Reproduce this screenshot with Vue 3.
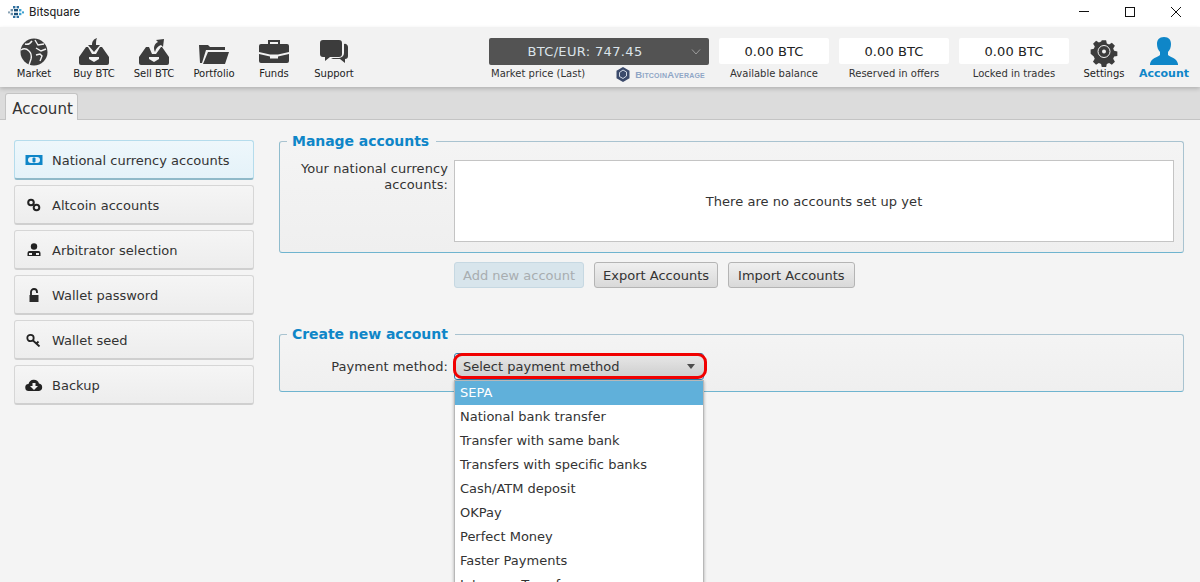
<script setup>
const navItems = [
  { label: 'Market', icon: 'market' },
  { label: 'Buy BTC', icon: 'buy' },
  { label: 'Sell BTC', icon: 'sell' },
  { label: 'Portfolio', icon: 'portfolio' },
  { label: 'Funds', icon: 'funds' },
  { label: 'Support', icon: 'support' },
]
const balances = [
  { value: '0.00 BTC', label: 'Available balance' },
  { value: '0.00 BTC', label: 'Reserved in offers' },
  { value: '0.00 BTC', label: 'Locked in trades' },
]
const sideItems = [
  { label: 'National currency accounts', icon: 'money', active: true },
  { label: 'Altcoin accounts', icon: 'link' },
  { label: 'Arbitrator selection', icon: 'arb' },
  { label: 'Wallet password', icon: 'lock' },
  { label: 'Wallet seed', icon: 'key' },
  { label: 'Backup', icon: 'cloud' },
]
const options = [
  'National bank transfer',
  'Transfer with same bank',
  'Transfers with specific banks',
  'Cash/ATM deposit',
  'OKPay',
  'Perfect Money',
  'Faster Payments',
  'Interac e-Transfer',
]
</script>

<template>
  <div class="app">
    <header class="titlebar">
      <svg class="logo" width="16" height="12" viewBox="0 0 16 12">
        <g fill="#2f6f9f">
          <rect x="5" y="0" width="2.4" height="2.4" /><rect x="8.6" y="0" width="2.4" height="2.4" />
          <rect x="2.6" y="3" width="2.4" height="2.4" fill="#6b8ea8" /><rect x="6" y="3" width="4" height="2.4" fill="#1c4f78" /><rect x="11" y="3" width="2.4" height="2.4" fill="#3aa0d0" />
          <rect x="0" y="5.4" width="2" height="2" fill="#8aa3b5" /><rect x="14" y="5.4" width="2" height="2" fill="#3aa0d0" />
          <rect x="2.6" y="6.8" width="2.4" height="2.4" fill="#6b8ea8" /><rect x="6" y="6.8" width="4" height="2.4" fill="#1c4f78" /><rect x="11" y="6.8" width="2.4" height="2.4" fill="#3aa0d0" />
          <rect x="5" y="9.8" width="2.4" height="2.2" /><rect x="8.6" y="9.8" width="2.4" height="2.2" />
        </g>
      </svg>
      <span class="app-name">Bitsquare</span>
      <div class="win-controls">
        <svg width="12" height="12" viewBox="0 0 12 12"><path d="M1 5.5h10" stroke="#111" fill="none" /></svg>
        <svg width="12" height="12" viewBox="0 0 12 12"><rect x="1.5" y="1.5" width="9" height="9" stroke="#111" fill="none" /></svg>
        <svg width="12" height="12" viewBox="0 0 12 12"><path d="M1 1l10 10M11 1L1 11" stroke="#111" fill="none" /></svg>
      </div>
    </header>

    <nav class="topbar">
      <div class="nav-left">
        <div v-for="item in navItems" :key="item.label" class="nav-item">
          <svg class="nav-icon" width="34" height="30" viewBox="0 0 34 30">
            <g v-if="item.icon === 'market'">
              <circle cx="17" cy="15" r="13.5" fill="#3c3c3c" />
              <g fill="none" stroke="#f2f2f2" stroke-width="1.4">
                <path d="M8 7c3 1 5 0 7-3" />
                <path d="M4 13c3-2 6-1 8 1s3 4 2 8l-2 6" />
                <path d="M18 3l3 5 6-1" />
                <path d="M19 11l5 3 5-2" />
                <path d="M19 18l4-1 2 2-2 5" />
              </g>
            </g>
            <g v-else-if="item.icon === 'buy'" fill="#3c3c3c">
              <path d="M20 1c-3 1-5 3-5 7h-4l6 7 6-7h-4c0-3 0-5 1-7z" />
              <path d="M9 10h2l4 7h4l4-7h2l7 10v6a2 2 0 0 1-2 2H4a2 2 0 0 1-2-2v-6z" />
              <path d="M12 20h10v2l-5 3-5-3z" fill="#f2f2f2" />
            </g>
            <g v-else-if="item.icon === 'sell'" fill="#3c3c3c">
              <path d="M19 3l8-1-1 8-2-2c-3 1-5 3-6 7-2-4-1-8 3-10z" />
              <path d="M9 10h3l3 7h4l5-7h1l7 10v6a2 2 0 0 1-2 2H4a2 2 0 0 1-2-2v-6z" />
              <path d="M12 20h10v2l-5 3-5-3z" fill="#f2f2f2" />
            </g>
            <g v-else-if="item.icon === 'portfolio'" fill="#3c3c3c">
              <path d="M2 8h9l2 2h15v3H9L5 26H3z" />
              <path d="M11 15h21l-4 12H6z" />
            </g>
            <g v-else-if="item.icon === 'funds'" fill="#3c3c3c">
              <path d="M12 7V4h10v3" fill="none" stroke="#3c3c3c" stroke-width="2" />
              <path d="M2 9a2 2 0 0 1 2-2h26a2 2 0 0 1 2 2v6l-11 2.500h-8L2 15z" />
              <path d="M2 17l11 2.500v2h8v-2l11-2.500v7a2 2 0 0 1-2 2H4a2 2 0 0 1-2-2z" />
            </g>
            <g v-else fill="#3c3c3c" transform="translate(2 0)">
              <path d="M4 3h16a3 3 0 0 1 3 3v11a3 3 0 0 1-3 3h-9l-5 4v-4H4a3 3 0 0 1-3-3V6a3 3 0 0 1 3-3z" />
              <path d="M25 7a3 3 0 0 1 4 3v9a3 3 0 0 1-3 3v4l-5-4h-7l-2-1h8a5 5 0 0 0 5-5z" />
            </g>
          </svg>
          <span class="nav-label">{{ item.label }}</span>
        </div>
      </div>

      <div class="nav-right">
        <div class="stat price">
          <div class="price-box">
            <span>BTC/EUR: 747.45</span>
            <svg class="chev" width="10" height="6" viewBox="0 0 10 6"><path d="M1 .5l4 4.500 4-4.500" fill="none" stroke="#9c9c9c" /></svg>
          </div>
          <div class="price-sub">
            <span>Market price (Last)</span>
            <span class="ba">
              <svg width="14" height="15" viewBox="0 0 14 15">
                <path d="M7 0l6.500 3.700v7.600L7 15 .5 11.300V3.700z" fill="#3b4a6b" />
                <path d="M7 3l3.500 2v4L7 11.500 3.500 9.500V5.500z" fill="none" stroke="#cfd6e2" />
              </svg>
              <span class="ba-text">BitcoinAverage</span>
            </span>
          </div>
        </div>
        <div v-for="b in balances" :key="b.label" class="stat balance">
          <div class="balance-box">{{ b.value }}</div>
          <span class="stat-label">{{ b.label }}</span>
        </div>
        <div class="nav-item settings">
          <svg class="nav-icon" width="30" height="30" viewBox="0 0 30 30">
            <path d="M12.500 2h5l.8 3.700 2.600 1.100 3.200-2 3.500 3.500-2 3.200 1.100 2.600 3.700.8v5l-3.700.8-1.100 2.600 2 3.200-3.500 3.500-3.200-2-2.600 1.100-.8 3.700h-5l-.8-3.700-2.600-1.100-3.200 2-3.500-3.500 2-3.200-1.100-2.600L-.3 17.500v-5l3.700-.8 1.100-2.600-2-3.200 3.500-3.500 3.200 2 2.600-1.100z" fill="#3c3c3c" transform="translate(1.900 1.600) scale(.87)" />
            <circle cx="15" cy="14.500" r="6" fill="none" stroke="#f2f2f2" />
            <circle cx="15" cy="14.500" r="2" fill="#f2f2f2" />
          </svg>
          <span class="nav-label">Settings</span>
        </div>
        <div class="nav-item account">
          <svg class="nav-icon" width="30" height="30" viewBox="0 0 30 30">
            <path d="M15 0c5 0 7 3 7 7 0 3-1 6-3 8v3c2 2 9 3 10 9v1H1v-1c1-6 8-7 10-9v-3c-2-2-3-5-3-8 0-4 2-7 7-7z" fill="#0f86c8" />
          </svg>
          <span class="nav-label active-label">Account</span>
        </div>
      </div>
    </nav>

    <div class="tabstrip">
      <div class="tab">Account</div>
    </div>

    <main class="content">
      <aside class="sidebar">
        <button v-for="s in sideItems" :key="s.label" class="side-btn" :class="{ active: s.active }">
          <span class="side-icon">
            <svg width="18" height="14" viewBox="0 0 18 14">
              <g v-if="s.icon === 'money'">
                <rect x="0.500" y="2" width="17" height="10" fill="#0f86c8" />
                <rect x="3" y="4" width="12" height="6" rx="3" fill="#e6f3fa" />
                <rect x="7.500" y="4.500" width="3" height="5" rx="1" fill="#0f86c8" />
              </g>
              <g v-else-if="s.icon === 'link'" fill="none" stroke="#222" stroke-width="2">
                <circle cx="6" cy="4.500" r="2.800" />
                <circle cx="11.500" cy="9.500" r="2.800" />
              </g>
              <g v-else-if="s.icon === 'arb'" fill="#222">
                <circle cx="9" cy="3.500" r="3.200" />
                <path d="M2.500 13V10a2 2 0 0 1 2-2h9a2 2 0 0 1 2 2v3z" />
                <rect x="4" y="10" width="3" height="2" fill="#f2f2f2" />
                <rect x="11" y="10" width="3" height="2" fill="#f2f2f2" />
              </g>
              <g v-else-if="s.icon === 'lock'">
                <path d="M6 7V4a3 3 0 0 1 6 0v1" fill="none" stroke="#222" stroke-width="1.800" />
                <rect x="4.500" y="7" width="9" height="7" fill="#2a2a2a" />
              </g>
              <g v-else-if="s.icon === 'key'" fill="none" stroke="#222" stroke-width="1.800">
                <circle cx="5.500" cy="5" r="3.200" />
                <path d="M8 7.500l6.500 6M11.500 10.500l2-2" />
              </g>
              <g v-else>
                <path d="M4 13a3.500 3.500 0 0 1-.5-7A5.500 5.500 0 0 1 14 5.500a3.800 3.800 0 0 1 0 7.500z" fill="#222" />
                <path d="M7.500 5h3v3H13l-4 4-4-4h2.500z" fill="#f2f2f2" />
              </g>
            </svg>
          </span>
          <span>{{ s.label }}</span>
        </button>
      </aside>

      <section class="main">
        <fieldset class="group manage">
          <legend>Manage accounts</legend>
          <div class="row">
            <label class="field-label">Your national currency accounts:</label>
            <div class="list-box">There are no accounts set up yet</div>
          </div>
        </fieldset>

        <div class="actions">
          <button class="btn disabled">Add new account</button>
          <button class="btn">Export Accounts</button>
          <button class="btn">Import Accounts</button>
        </div>

        <fieldset class="group create">
          <legend>Create new account</legend>
          <div class="row center">
            <label class="field-label">Payment method:</label>
            <div class="combo-wrap">
              <div class="combo">
                <span>Select payment method</span>
                <i class="arrow"></i>
              </div>
              <ul class="dropdown">
                <li class="selected">SEPA</li>
                <li v-for="o in options" :key="o">{{ o }}</li>
              </ul>
            </div>
          </div>
        </fieldset>
      </section>
    </main>
  </div>
</template>

<style>
html, body { margin: 0; padding: 0; overflow: hidden; background: #f4f4f4; }
</style>

<style scoped>
.app {
  width: 1200px;
  height: 582px;
  overflow: hidden;
  display: flex;
  flex-direction: column;
  font-family: "DejaVu Sans", Verdana, sans-serif;
  color: #333;
  background: #f4f4f4;
}
.titlebar {
  height: 27px;
  flex: none;
  background: #fff;
  display: flex;
  align-items: center;
  padding: 0 0 4px 8px;
  box-sizing: border-box;
}
.logo { margin-right: 5px; }
.app-name { font: 12px Roboto, "Noto Sans", sans-serif; color: #222; }
.win-controls {
  margin-left: auto;
  display: flex;
  gap: 34px;
  padding-right: 18px;
}
.topbar {
  height: 60px;
  flex: none;
  box-sizing: border-box;
  background: #f2f2f2;
  display: flex;
  justify-content: space-between;
  padding: 0 6px 0 4px;
  box-shadow: 0 2px 4px rgba(0, 0, 0, .18);
  position: relative;
  z-index: 1;
}
.nav-left { display: flex; }
.nav-item {
  width: 60px;
  display: flex;
  flex-direction: column;
  align-items: center;
  padding-top: 10px;
  box-sizing: border-box;
}
.nav-icon { display: block; height: 30px; }
.nav-label { font-size: 10px; color: #222; line-height: 12px; margin-top: 1px; white-space: nowrap; }
.account .nav-label { font-weight: bold; font-size: 11px; color: #0f86c8; }
.nav-right { display: flex; }
.stat { display: flex; flex-direction: column; padding-top: 11px; margin-right: 10px; }
.price { width: 220px; }
.price-box {
  height: 27px;
  background: #535353;
  border-radius: 2px;
  color: #dbe4ea;
  font-size: 13px;
  letter-spacing: .35px;
  display: flex;
  align-items: center;
  justify-content: center;
  position: relative;
  padding-right: 28px;
  box-sizing: border-box;
}
.chev { position: absolute; right: 8px; top: 11px; }
.price-sub {
  display: flex;
  justify-content: space-between;
  font-size: 10px;
  line-height: 12px;
  margin-top: 3px;
  color: #333;
  padding: 0 4px 0 2px;
}
.ba { display: flex; align-items: center; gap: 5px; height: 15px; margin-top: -1px; }
.ba-text {
  font: bold 9.500px "Liberation Sans", sans-serif;
  font-variant: small-caps;
  letter-spacing: .2px;
  color: #8fa6c6;
}
.balance { width: 110px; align-items: center; }
.balance-box {
  width: 100%;
  height: 26px;
  background: #fff;
  border-radius: 2px;
  font-size: 13px;
  color: #222;
  display: flex;
  align-items: center;
  justify-content: center;
  letter-spacing: .1px;
}
.stat-label { font-size: 10px; line-height: 12px; margin-top: 4px; color: #333; white-space: nowrap; }
.settings { margin-left: -5px; }
.tabstrip {
  height: 33px;
  flex: none;
  background: #dcdcdc;
  display: flex;
  align-items: flex-end;
  padding-left: 5px;
  border-bottom: 1px solid #c4c4c4;
  box-sizing: border-box;
}
.tab {
  width: 73px;
  height: 27px;
  box-sizing: border-box;
  padding-left: 2px;
  background: #f4f4f4;
  border: 1px solid #c4c4c4;
  border-bottom: none;
  border-radius: 3px 3px 0 0;
  font-size: 15px;
  line-height: 30px;
  text-align: center;
  color: #333;
  margin-bottom: -1px;
}
.content { flex: 1; display: flex; min-height: 0; padding: 11px 16px 0 14px; }
.sidebar { width: 240px; flex: none; display: flex; flex-direction: column; gap: 5px; margin-top: 9px; }
.side-btn {
  height: 40px;
  display: flex;
  align-items: center;
  box-sizing: border-box;
  padding: 1px 0 0;
  background: linear-gradient(#f5f5f5, #ededed);
  border: 1px solid #d6d6d6;
  border-bottom: 2px solid #cfcfcf;
  border-radius: 3px;
  font: 13px "DejaVu Sans", Verdana, sans-serif;
  color: #333;
}
.side-btn.active {
  background: linear-gradient(#eef7fb, #e4f2f9);
  border-color: #b5dcec;
  border-bottom-color: #8fb9c9;
}
.side-icon { width: 37px; display: flex; justify-content: center; padding-left: 1px; box-sizing: border-box; }
.main { margin-left: 25px; flex: 1; display: flex; flex-direction: column; min-width: 0; }
.group {
  margin: 0;
  min-width: 0;
  padding: 0;
  border: 1px solid #a9c3d0;
  border-bottom-color: #6fb4cf;
  border-left-color: #8fbccd;
  border-radius: 3px;
  background: linear-gradient(#f4f4f4, #efefef);
}
.group legend {
  font-size: 14px;
  font-weight: bold;
  color: #0f86c8;
  margin-left: 7px;
  padding: 0 7px 0 5px;
  line-height: 20px;
  letter-spacing: -.05px;
}
.manage { height: 120px; flex: none; }
.manage .row { padding-top: 9px; }
.row { display: flex; }
.row.center { align-items: flex-start; }
.field-label {
  width: 168px;
  flex: none;
  text-align: right;
  font-size: 13px;
  line-height: 16px;
  padding-top: 1px;
  color: #333;
  margin-right: 6px;
  letter-spacing: .08px;
}
.list-box {
  width: 720px;
  height: 82px;
  box-sizing: border-box;
  background: #fff;
  border: 1px solid #c4c4c4;
  font-size: 13px;
  letter-spacing: .05px;
  display: flex;
  align-items: center;
  justify-content: center;
  color: #333;
}
.actions { display: flex; gap: 10px; margin: 9px 0 0 174px; padding-left: 1px; }
.btn {
  height: 26px;
  box-sizing: border-box;
  padding: 0 8px;
  background: linear-gradient(#efefef, #d9d9d9);
  border: 1px solid #b4b4b4;
  border-radius: 3px;
  font: 13px "DejaVu Sans", Verdana, sans-serif;
  color: #333;
}
.btn:last-child { padding: 0 9px; }
.btn.disabled {
  background: #d8e5ec;
  border-color: #c6d8e2;
  color: #a8adb0;
}
.create { height: 66px; flex: none; margin-top: 36px; }
.create .row { padding-top: 9px; }
.create .field-label { line-height: 28px; padding-top: 0; }
.combo-wrap { position: relative; width: 250px; z-index: 1; }
.combo {
  position: relative;
  height: 26px;
  box-sizing: border-box;
  border: 3px solid #f00000;
  border-radius: 9px;
  background: linear-gradient(#e6e6e6, #cfcfcf);
  display: flex;
  align-items: center;
  justify-content: space-between;
  padding: 0 9px 0 7px;
  font-size: 13px;
  color: #333;
  margin-left: -1px;
  width: 254px;
}
.combo::before {
  content: "";
  position: absolute;
  top: -3px;
  left: -2px;
  right: 0;
  bottom: -4px;
  border: 1px solid #2c7fb0;
  border-radius: 3px;
  z-index: -1;
}
.arrow {
  width: 0;
  height: 0;
  border-left: 4.500px solid transparent;
  border-right: 4.500px solid transparent;
  border-top: 5px solid #4c4c4c;
}
.dropdown {
  position: absolute;
  left: 0;
  top: 27px;
  width: 250px;
  box-sizing: border-box;
  margin: 0;
  padding: 0;
  list-style: none;
  background: #fff;
  border: 1px solid #b8b8b8;
  box-shadow: 0 1px 3px rgba(0, 0, 0, .3);
  z-index: 3;
}
.dropdown li {
  height: 24px;
  line-height: 24px;
  padding-left: 5px;
  font-size: 13px;
  color: #333;
}
.dropdown li.selected { background: #60b0da; color: #fff; }
</style>
